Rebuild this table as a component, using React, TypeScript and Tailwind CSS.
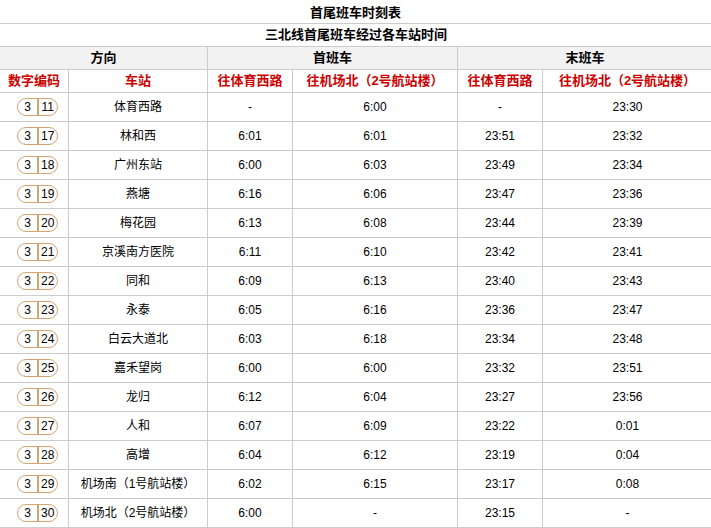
import React from 'react';

const rows: [string, string, string, string, string, string][] = [
  ['11', '体育西路', '-', '6:00', '-', '23:30'],
  ['17', '林和西', '6:01', '6:01', '23:51', '23:32'],
  ['18', '广州东站', '6:00', '6:03', '23:49', '23:34'],
  ['19', '燕塘', '6:16', '6:06', '23:47', '23:36'],
  ['20', '梅花园', '6:13', '6:08', '23:44', '23:39'],
  ['21', '京溪南方医院', '6:11', '6:10', '23:42', '23:41'],
  ['22', '同和', '6:09', '6:13', '23:40', '23:43'],
  ['23', '永泰', '6:05', '6:16', '23:36', '23:47'],
  ['24', '白云大道北', '6:03', '6:18', '23:34', '23:48'],
  ['25', '嘉禾望岗', '6:00', '6:00', '23:32', '23:51'],
  ['26', '龙归', '6:12', '6:04', '23:27', '23:56'],
  ['27', '人和', '6:07', '6:09', '23:22', '0:01'],
  ['28', '高增', '6:04', '6:12', '23:19', '0:04'],
  ['29', '机场南（1号航站楼）', '6:02', '6:15', '23:17', '0:08'],
  ['30', '机场北（2号航站楼）', '6:00', '-', '23:15', '-'],
];

const cell = 'border border-[#cccccc] text-center p-0';

const Badge: React.FC<{ code: string }> = ({ code }) => (
  <span className="inline-flex h-[18px] w-[41px] items-center rounded-full border-[1.5px] border-[#d5a470] align-middle">
    <span className="w-[19px] text-center">3</span>
    <span className="h-full w-[1.5px] bg-[#d5a470]" />
    <span className="flex-1 text-center">{code}</span>
  </span>
);

const App: React.FC = () => {
  return (
    <div
      className="w-[711px] bg-white text-[12px] text-black"
      style={{ fontFamily: '"Liberation Sans", "Noto Sans CJK SC", sans-serif' }}
    >
      <div className="flex h-[23px] items-end justify-center pb-[1px] text-[13px] font-bold">首尾班车时刻表</div>
      <table className="w-[713px] -ml-px table-fixed border-collapse">
        <colgroup>
          <col className="w-[69px]" />
          <col className="w-[139px]" />
          <col className="w-[85px]" />
          <col className="w-[165px]" />
          <col className="w-[85px]" />
          <col className="w-[170px]" />
        </colgroup>
        <tbody>
          <tr className="h-[23px]">
            <td colSpan={6} className={`${cell} text-[13px] font-bold`}>三北线首尾班车经过各车站时间</td>
          </tr>
          <tr className="h-[23px] bg-[#f2f2f2] text-[13px] font-bold">
            <td colSpan={2} className={cell}>方向</td>
            <td colSpan={2} className={cell}>首班车</td>
            <td colSpan={2} className={cell}>末班车</td>
          </tr>
          <tr className="h-[23px] text-[13px] font-bold text-[#cc0000]">
            <td className={cell}>数字编码</td>
            <td className={cell}>车站</td>
            <td className={cell}>往体育西路</td>
            <td className={cell}>往机场北（2号航站楼）</td>
            <td className={cell}>往体育西路</td>
            <td className={cell}>往机场北（2号航站楼）</td>
          </tr>
          {rows.map((r) => (
            <tr key={r[0]} className="h-[29px]">
              <td className={`${cell} pr-[10px] text-right`}>
                <Badge code={r[0]} />
              </td>
              <td className={cell}>{r[1]}</td>
              <td className={cell}>{r[2]}</td>
              <td className={cell}>{r[3]}</td>
              <td className={cell}>{r[4]}</td>
              <td className={cell}>{r[5]}</td>
            </tr>
          ))}
        </tbody>
      </table>
    </div>
  );
};

export default App;
